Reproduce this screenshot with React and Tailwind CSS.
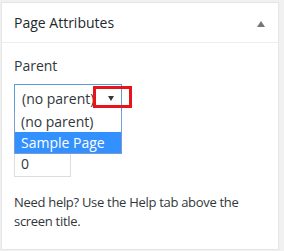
export default function App() {
  return (
    <div className="min-h-[251px] w-[284px] bg-[#f1f1f1] pt-[2px] pl-[1px] font-['Open_Sans',sans-serif] text-[#32373c]">
      <div className="w-[278px] border border-[#e5e5e5] bg-white">
        <div className="flex h-[40px] items-center justify-between border-b border-[#eeeeee] pl-[12px] pr-[13px]">
          <h2 className="text-[14px] text-[#23282d]">Page Attributes</h2>
          <svg width="8" height="6" viewBox="0 0 8 6" className="mt-[2px]">
            <path d="M4 0 L8 6 L0 6 Z" fill="#72777c" />
          </svg>
        </div>

        <div className="px-[12px] pb-[18px]">
          <p className="mt-[13px] text-[14px] leading-[20px]">Parent</p>

          <div className="relative mt-[8px] w-[108px]">
            <div className="flex h-[28px] items-center justify-between border border-[#5b9dd9] pl-[7px] pr-[7px] text-[14px]">
              <span>(no parent)</span>
              <svg width="6" height="5" viewBox="0 0 6 5">
                <path d="M0 0 L6 0 L3 5 Z" fill="#32373c" />
              </svg>
            </div>

            <ul className="absolute left-0 top-[27px] z-10 w-[108px] border border-[#7a9cd3] border-t-0 bg-white text-[14px] leading-[21px]">
              <li className="px-[6px]">(no parent)</li>
              <li className="bg-[#3390ff] px-[6px] text-white">Sample Page</li>
            </ul>

            <div className="absolute left-[79px] top-[2px] z-20 h-[22px] w-[39px] border-[3px] border-[#e8141c]" />
          </div>

          <div className="mt-[38px] flex h-[27px] w-[57px] items-center border border-[#ddd] px-[6px] text-[14px]">0</div>

          <p className="mt-[16px] text-[13px] leading-[19px] tracking-[-0.3px]">
            Need help? Use the Help tab above the screen title.
          </p>
        </div>
      </div>
    </div>
  );
}
